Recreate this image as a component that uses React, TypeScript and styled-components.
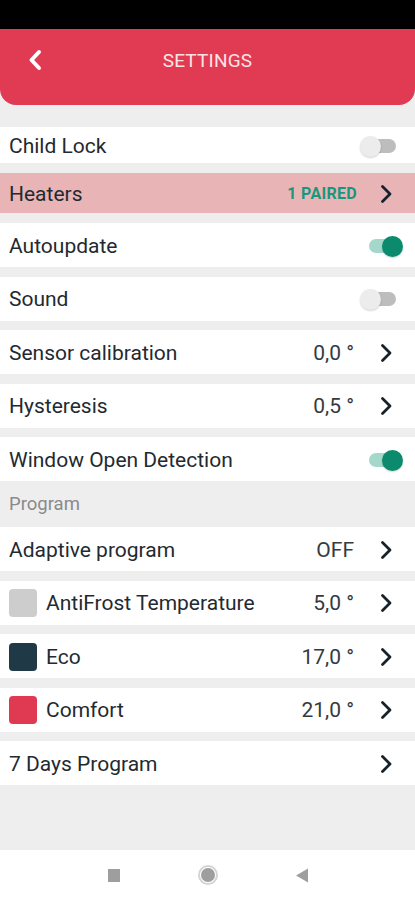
import React from 'react';
import styled, { createGlobalStyle } from 'styled-components';

const GlobalStyle = createGlobalStyle`
  html, body {
    margin: 0;
    padding: 0;
    background: #eeeeee;
    font-family: Roboto, "Noto Sans", sans-serif;
  }
  * { box-sizing: border-box; }
`;

const Page = styled.div`
  width: 415px;
  min-height: 900px;
  display: flex;
  flex-direction: column;
  background: #eeeeee;
`;

const StatusBar = styled.div`
  height: 29px;
  background: #000000;
`;

const Header = styled.header`
  height: 76px;
  background: #e03b52;
  border-radius: 0 0 16px 16px;
  display: grid;
  grid-template-columns: 1fr auto 1fr;
  align-items: center;
  align-content: start;
  padding: 19px 0 0 28px;
`;

const BackButton = styled.div`
  width: 24px;
  height: 24px;
  display: flex;
  align-items: center;
`;

const Title = styled.h1`
  margin: 0;
  font-size: 19px;
  font-weight: 400;
  color: #fde3e6;
  letter-spacing: 0.2px;
  transform: translateX(-14px);
`;

const List = styled.main`
  flex: 1;
  display: flex;
  flex-direction: column;
  padding-top: 22px;
`;

const Row = styled.div<{ $h?: number; $gap?: number; $tint?: boolean }>`
  height: ${(p) => p.$h ?? 44}px;
  margin-bottom: ${(p) => p.$gap ?? 9.5}px;
  background: ${(p) => (p.$tint ? '#e9b4b6' : '#ffffff')};
  display: flex;
  align-items: center;
  padding: 1px 12px 0 9px;
`;

const SectionTitle = styled.div`
  height: 46px;
  display: flex;
  align-items: center;
  padding-left: 9px;
  font-size: 18.5px;
  color: #8a8a8a;
`;

const Label = styled.span`
  flex: 1;
  font-size: 21px;
  color: #1f2a31;
`;

const Swatch = styled.span<{ $color: string }>`
  width: 28px;
  height: 28px;
  border-radius: 4px;
  background: ${(p) => p.$color};
  margin-right: 9px;
  flex-shrink: 0;
`;

const Value = styled.span`
  font-size: 21px;
  color: #333b40;
  margin-right: 15px;
`;

const Badge = styled.span`
  font-size: 16px;
  font-weight: 700;
  color: #19977d;
  letter-spacing: 0.3px;
  margin-right: 12px;
`;

const ChevronBox = styled.span`
  width: 34px;
  display: flex;
  justify-content: center;
`;

const Toggle = styled.span`
  position: relative;
  width: 43px;
  height: 20px;
  display: block;
`;

const Track = styled.span<{ $on?: boolean }>`
  position: absolute;
  top: 3px;
  left: ${(p) => (p.$on ? 9 : 5)}px;
  width: 31px;
  height: 14px;
  border-radius: 7px;
  background: ${(p) => (p.$on ? '#a3d8cb' : '#bdbdbd')};
`;

const Thumb = styled.span<{ $on?: boolean }>`
  position: absolute;
  top: 0;
  left: ${(p) => (p.$on ? 22 : 0)}px;
  width: 21px;
  height: 21px;
  border-radius: 50%;
  background: ${(p) => (p.$on ? '#0b8a6e' : '#ececec')};
  box-shadow: 0 1px 2px rgba(0, 0, 0, 0.18);
`;

const NavBar = styled.nav`
  height: 50px;
  background: #ffffff;
  display: flex;
  justify-content: center;
  align-items: center;
`;

const NavSlot = styled.span`
  width: 94px;
  display: flex;
  justify-content: center;
  align-items: center;
`;

const NavSquare = styled.span`
  width: 12px;
  height: 13px;
  background: #9e9e9e;
`;

const NavCircle = styled.span`
  width: 20px;
  height: 20px;
  border-radius: 50%;
  border: 2px solid #d4d4d4;
  display: flex;
  align-items: center;
  justify-content: center;
  &::after {
    content: '';
    width: 14px;
    height: 14px;
    border-radius: 50%;
    background: #9e9e9e;
  }
`;

const Chevron = () => (
  <svg width="13" height="20" viewBox="0 0 13 20">
    <polyline points="2.5,2.5 10,10 2.5,17.5" fill="none" stroke="#15212b" strokeWidth="2.8" strokeLinecap="round" strokeLinejoin="round" />
  </svg>
);

const Switch = ({ on }: { on?: boolean }) => (
  <Toggle>
    <Track $on={on} />
    <Thumb $on={on} />
  </Toggle>
);

type Item = { label: string; value?: string; swatch?: string };

const program: Item[] = [
  { label: 'Adaptive program', value: 'OFF' },
  { label: 'AntiFrost Temperature', value: '5,0 °', swatch: '#cdcdcd' },
  { label: 'Eco', value: '17,0 °', swatch: '#1f3947' },
  { label: 'Comfort', value: '21,0 °', swatch: '#e03a52' },
];

const App: React.FC = () => {
  return (
    <Page>
      <GlobalStyle />
      <StatusBar />
      <Header>
        <BackButton>
          <svg width="14" height="22" viewBox="0 0 14 22">
            <polyline points="11,3 3.5,11 11,19" fill="none" stroke="#ffffff" strokeWidth="4" strokeLinecap="round" strokeLinejoin="round" />
          </svg>
        </BackButton>
        <Title>SETTINGS</Title>
        <span />
      </Header>

      <List>
        <Row $h={36} $gap={10}>
          <Label>Child Lock</Label>
          <Switch />
        </Row>
        <Row $h={40} $gap={10} $tint>
          <Label>Heaters</Label>
          <Badge>1 PAIRED</Badge>
          <ChevronBox><Chevron /></ChevronBox>
        </Row>
        <Row>
          <Label>Autoupdate</Label>
          <Switch on />
        </Row>
        <Row>
          <Label>Sound</Label>
          <Switch />
        </Row>
        <Row>
          <Label>Sensor calibration</Label>
          <Value>0,0 °</Value>
          <ChevronBox><Chevron /></ChevronBox>
        </Row>
        <Row>
          <Label>Hysteresis</Label>
          <Value>0,5 °</Value>
          <ChevronBox><Chevron /></ChevronBox>
        </Row>
        <Row $gap={0}>
          <Label>Window Open Detection</Label>
          <Switch on />
        </Row>

        <SectionTitle>Program</SectionTitle>

        {program.map((item) => (
          <Row key={item.label}>
            {item.swatch && <Swatch $color={item.swatch} />}
            <Label>{item.label}</Label>
            <Value>{item.value}</Value>
            <ChevronBox><Chevron /></ChevronBox>
          </Row>
        ))}
        <Row>
          <Label>7 Days Program</Label>
          <ChevronBox><Chevron /></ChevronBox>
        </Row>
      </List>

      <NavBar>
        <NavSlot><NavSquare /></NavSlot>
        <NavSlot><NavCircle /></NavSlot>
        <NavSlot>
          <svg width="14" height="15" viewBox="0 0 14 15">
            <polygon points="13,0.5 13,14.5 1,7.5" fill="#9e9e9e" />
          </svg>
        </NavSlot>
      </NavBar>
    </Page>
  );
};

export default App;
